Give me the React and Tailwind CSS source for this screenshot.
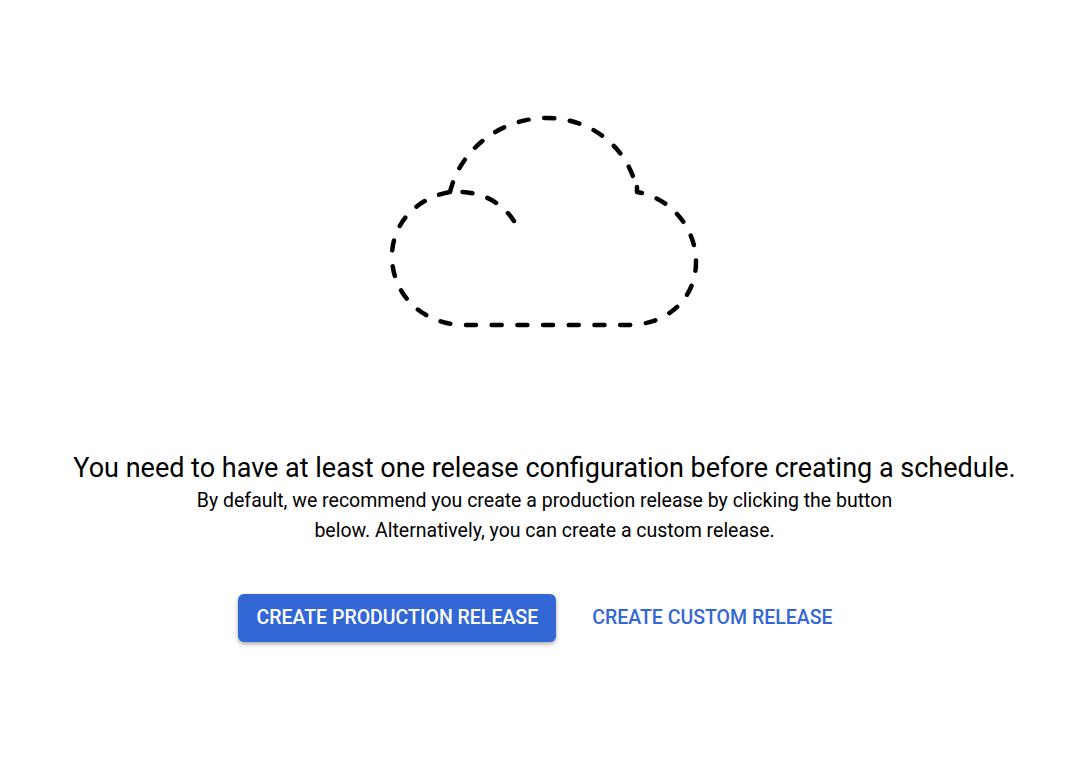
const Cloud = () => (
  <svg width="1089" height="240" viewBox="0 110 1089 240" fill="none" className="block">
    <g stroke="#000" strokeWidth="4.5" strokeLinecap="round" strokeLinejoin="round" strokeDasharray="10 15.7">
      <path d="M450 192C460 150 500 118 547 118C590 118 626 146 636 186" />
      <path d="M637 187L637 192C671 198 696 228 696 262C696 298 668 325 628 325L465 325C424 325 392 296 392 256C392 224 416 198 450 192" />
      <path d="M514 221C500 200 478 190 450 192" />
    </g>
  </svg>
);

export default function App() {
  return (
    <div className="w-full h-[770px] bg-white pt-[110px] flex flex-col items-center font-['Roboto',sans-serif]">
      <Cloud />
      <h2 className="mt-[100px] text-[27px] leading-[36px] text-black whitespace-nowrap">
        You need to have at least one release configuration before creating a schedule.
      </h2>
      <p className="w-[780px] text-center text-[19.5px] leading-[30px] text-black">
        By default, we recommend you create a production release by clicking the button
        <br />
        below. Alternatively, you can create a custom release.
      </p>
      <div className="mt-[48px] flex items-center gap-[18px]">
        <button className="h-12 px-[18px] rounded-md bg-[#3367d6] text-white text-[19.5px] font-medium shadow-[0_2px_4px_rgba(0,0,0,0.35)]">
          CREATE PRODUCTION RELEASE
        </button>
        <button className="h-12 px-[18px] rounded-md text-[#3367d6] text-[19.5px] font-medium">
          CREATE CUSTOM RELEASE
        </button>
      </div>
    </div>
  );
}
